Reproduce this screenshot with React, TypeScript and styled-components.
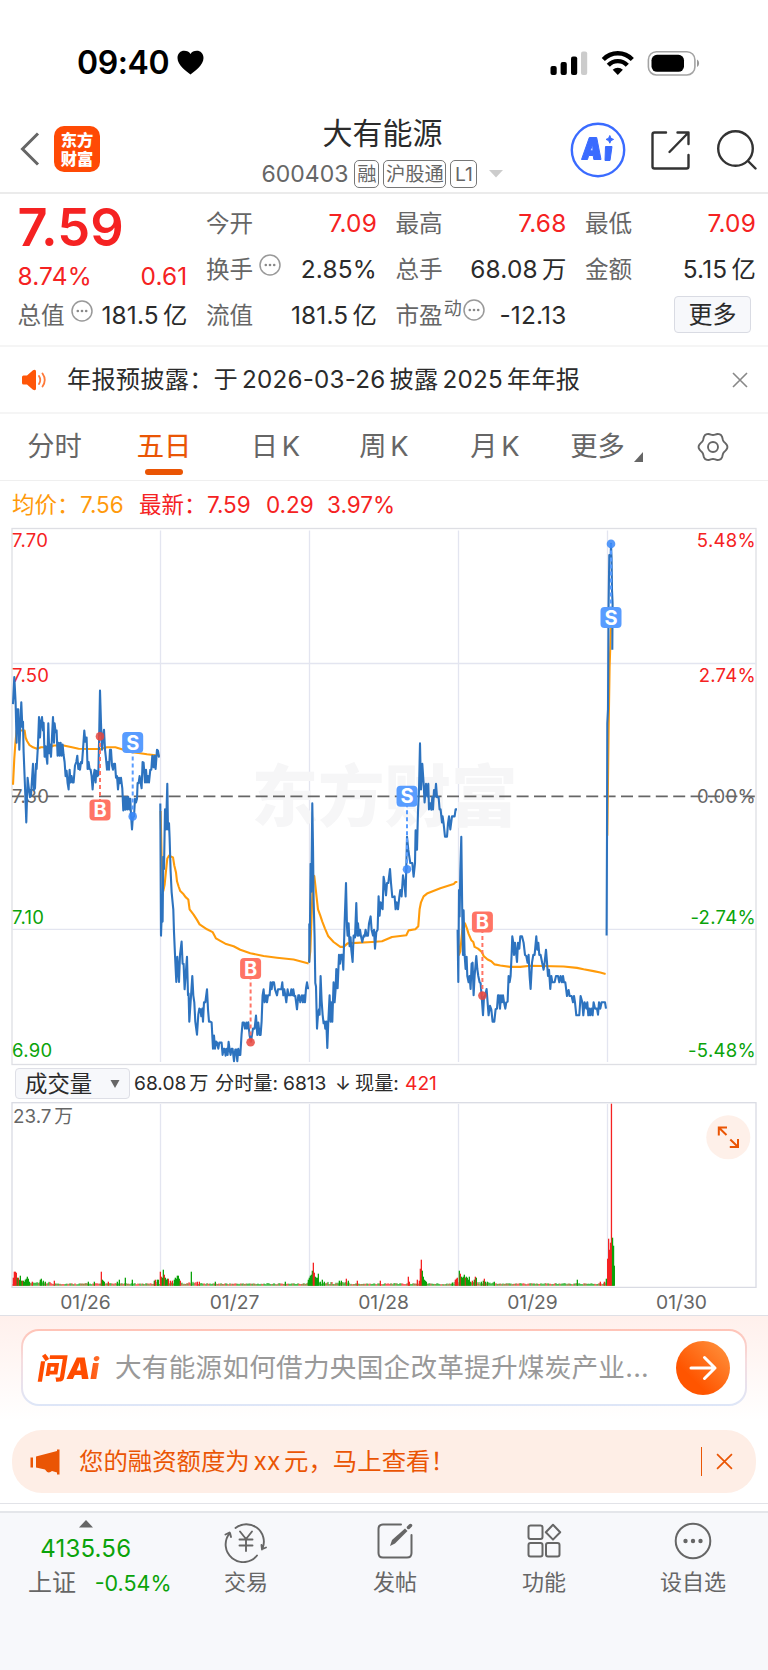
import React from "react";
import styled, { createGlobalStyle } from "styled-components";

const RED = "#f52222";
const GREEN = "#0aa30a";
const ORANGE = "#ea5504";
const INK = "#2b2b2b";
const GRAY = "#666";

const Global = createGlobalStyle`
  * { box-sizing: border-box; }
  body { margin: 0; background: #fff; }
  svg { display: block; flex: none; }
`;

const Screen = styled.div`
  width: 768px;
  height: 1670px;
  display: flex;
  flex-direction: column;
  overflow: hidden;
  background: #fff;
  color: ${INK};
  font-family: Inter, "Noto Sans CJK SC", sans-serif;
  line-height: 1.3;
  white-space: nowrap;
`;

/* Status bar */
const StatusBar = styled.div`
  height: 104px;
  flex: none;
  display: flex;
  align-items: center;
  padding: 21px 68px 0 77px;
`;
const Clock = styled.div`
  font-size: 32px;
  font-weight: 600;
  color: #000;
  line-height: 40px;
  width: 100px;
  letter-spacing: -0.4px;
`;
const StatusIcons = styled.div`
  margin-left: auto;
  display: flex;
  align-items: center;
`;

/* Title bar */
const NavBar = styled.header`
  height: 90px;
  flex: none;
  display: grid;
  grid-template-columns: 240px 1fr 240px;
  border-bottom: 2px solid #ebebeb;
`;
const NavLeft = styled.div`
  display: flex;
  align-items: center;
  padding: 2px 0 0 20px;
  gap: 14px;
`;
const AppLogo = styled.div`
  width: 46px;
  height: 46px;
  border-radius: 10px;
  background: #ff4a05;
  color: #fff;
  font-family: "Noto Sans CJK SC", sans-serif;
  font-weight: 900;
  font-size: 16.3px;
  line-height: 19px;
  text-align: center;
  padding-top: 4px;
`;
const NavCenter = styled.div`
  display: flex;
  flex-direction: column;
  align-items: center;
  padding-right: 3px;
`;
const StockName = styled.h1`
  margin: 9px 0 0;
  font-size: 30px;
  font-weight: 400;
  line-height: 40px;
`;
const CodeRow = styled.div`
  display: flex;
  align-items: center;
  height: 28px;
  margin-top: 7px;
  color: ${GRAY};
`;
const Code = styled.span`
  font-size: 23px;
  line-height: 28px;
  margin-right: 6px;
`;
const Tag = styled.span<{ $w: number }>`
  width: ${(p) => p.$w}px;
  height: 28px;
  border: 1px solid #777;
  border-radius: 5px;
  font-size: 19.3px;
  line-height: 26px;
  display: flex;
  justify-content: center;
  margin-right: 4px;
`;
const NavRight = styled.div`
  display: flex;
  align-items: center;
  justify-content: flex-end;
  padding: 3px 11.5px 0 0;
`;

/* Quote */
const Quote = styled.section`
  height: 153px;
  flex: none;
  display: grid;
  grid-template-columns: 170px 171px 171px 171px;
  column-gap: 18.5px;
  padding: 7px 0 0 17.5px;
  border-bottom: 2px solid #f5f5f5;
`;
const QuoteCol = styled.div`
  display: flex;
  flex-direction: column;
`;
const QuoteRow = styled.div<{ $h?: number; $red?: boolean }>`
  height: ${(p) => p.$h ?? 46}px;
  flex: none;
  display: flex;
  align-items: center;
  justify-content: space-between;
  font-size: 24.4px;
  word-spacing: -3px;
  letter-spacing: 0.2px;
  color: ${(p) => (p.$red ? RED : INK)};
`;
const Label = styled.span`
  color: ${GRAY};
  display: flex;
  align-items: center;
  font-size: 23.6px;
  letter-spacing: 0;
`;
const Sup = styled.span`
  font-size: 18px;
  margin-bottom: 14px;
  padding-left: 1px;
`;
const MoreDots = styled.span`
  margin: 0 0 11px 6px;
  ${Sup} + & { margin-left: 1px; }
`;
const Price = styled.div`
  height: 53px;
  font-size: 52.3px;
  line-height: 53px;
  font-weight: 600;
  color: ${RED};
`;
const MoreButton = styled.button`
  width: 77px;
  height: 37px;
  border: 1px solid #d9dbe3;
  border-radius: 4px;
  background: #f7f8fb;
  font: inherit;
  font-size: 24px;
  line-height: 34px;
  color: ${INK};
  padding: 0;
  margin: -3px 5px 0 auto;
`;

/* Notice */
const Notice = styled.section`
  height: 67px;
  flex: none;
  display: flex;
  align-items: center;
  padding: 1px 20px 0 21px;
  border-bottom: 2px solid #f5f5f5;
  font-size: 24.2px;
  word-spacing: -3px;
  letter-spacing: 0.24px;
`;
const NoticeText = styled.span`
  margin: 0 auto 0 19px;
`;

/* Period tabs */
const Tabs = styled.nav`
  height: 67px;
  flex: none;
  display: flex;
  border-bottom: 1px solid #efefef;
  font-size: 27.3px;
  word-spacing: -4px;
  color: ${GRAY};
`;
const Tab = styled.div<{ $w: number; $active?: boolean }>`
  width: ${(p) => p.$w}px;
  display: flex;
  flex-direction: column;
  align-items: center;
  justify-content: center;
  line-height: 40px;
  color: ${(p) => (p.$active ? ORANGE : GRAY)};
  ${(p) =>
    p.$active &&
    `-webkit-text-stroke: 0.2px ${ORANGE};
    &::after { content: ""; width: 38px; height: 6px; border-radius: 3px; background: ${ORANGE}; margin: 2px 0 -8px; }`}
`;
const TabMore = styled.div`
  display: flex;
  align-items: flex-end;
  gap: 9px;
  svg { margin-bottom: 5px; }
`;

const Legend = styled.div`
  height: 44px;
  flex: none;
  display: flex;
  align-items: center;
  padding: 4px 0 0 12px;
  font-size: 22.5px;
  color: ${RED};
`;
const LegendItem = styled.span<{ $w: number; $c?: string }>`
  width: ${(p) => p.$w}px;
  color: ${(p) => p.$c ?? RED};
`;

/* Charts */
const PriceChart = styled.svg`
  font-family: Inter, sans-serif;
`;
const VolumeBar = styled.div`
  height: 36px;
  flex: none;
  display: flex;
  align-items: center;
  padding: 0 0 1px 15px;
  font-size: 19.2px;
  word-spacing: -2.5px;
`;
const Select = styled.div`
  width: 115px;
  height: 31px;
  border: 1.5px solid #dedfe6;
  border-radius: 4px;
  background: #f7f8fb;
  display: flex;
  align-items: center;
  justify-content: space-between;
  padding: 0 9px 0 9px;
  font-size: 22.4px;
  line-height: 28px;
  margin-right: 4px;
`;
const VolumeText = styled.span<{ $w?: number; $red?: boolean }>`
  width: ${(p) => (p.$w ? p.$w + "px" : "auto")};
  color: ${(p) => (p.$red ? RED : INK)};
`;
const Dates = styled.div`
  height: 28px;
  flex: none;
  display: grid;
  grid-template-columns: repeat(5, 149px);
  padding-left: 11px;
  text-align: center;
  font-size: 19.3px;
  line-height: 29px;
  color: ${GRAY};
  border-bottom: 1px solid #dfe0e6;
`;

/* Ask AI */
const AskArea = styled.section`
  height: 114px;
  flex: none;
  padding: 13px 21px 0;
  background: linear-gradient(#fff0ec, #fff 92%);
`;
const AskCard = styled.div`
  height: 77px;
  border: 2px solid transparent;
  border-radius: 18px;
  background: linear-gradient(#fff, #fff) padding-box,
    linear-gradient(#ffc3b6, #f6dcde 40%, #dde6f8) border-box;
  display: flex;
  align-items: center;
  padding: 0 15px 0 15px;
`;
const AskLogo = styled.div`
  width: 77px;
  font-size: 29.5px;
  line-height: 34px;
  font-weight: 900;
  letter-spacing: -0.1px;
  transform: skewX(-9deg);
  background: linear-gradient(75deg, #ff4c00 60%, #ff9a66);
  -webkit-background-clip: text;
  background-clip: text;
  color: transparent;
`;
const AskText = styled.div`
  font-size: 26.6px;
  letter-spacing: 0.26px;
  color: #999;
  margin-right: auto;
`;

/* Banner */
const Banner = styled.section`
  height: 63px;
  flex: none;
  margin: 0 12px;
  border-radius: 30px;
  background: #feeee6;
  color: ${ORANGE};
  display: flex;
  align-items: center;
  padding: 0 23px 0 18px;
  font-size: 24.4px;
  word-spacing: -3px;
`;
const BannerText = styled.span`
  margin: 0 auto 0 18px;
`;
const BannerRule = styled.i`
  width: 1.5px;
  height: 29px;
  background: ${ORANGE};
  margin-right: 14px;
`;
const Spacer = styled.div`
  height: 18px;
  flex: none;
  border-bottom: 7px solid #fff;
  box-shadow: inset 0 -1px 0 #e2e3e8;
`;

/* Bottom bar */
const BottomBar = styled.footer`
  flex: 1;
  display: grid;
  grid-template-columns: 171.5px 149px 149px 149px 149px;
  background: #f7f8fb;
  border-top: 2px solid #e4e6ea;
  color: ${GRAY};
`;
const IndexCell = styled.div`
  display: flex;
  flex-direction: column;
  align-items: center;
  padding-top: 7px;
`;
const IndexValue = styled.div`
  font-size: 24px;
  line-height: 30px;
  margin-top: 6px;
  letter-spacing: 0.2px;
  color: ${GREEN};
`;
const IndexRow = styled.div`
  display: flex;
  align-items: center;
  align-self: stretch;
  justify-content: space-between;
  padding: 0 0 0 28px;
  font-size: 24px;
  line-height: 34px;
  margin-top: 2px;
`;
const IndexChange = styled.span`
  color: ${GREEN};
  font-size: 21.5px;
`;
const Action = styled.div`
  display: flex;
  flex-direction: column;
  align-items: center;
  padding-top: 6px;
  font-size: 22px;
  line-height: 32px;
  gap: 3px;
`;

const DotsIcon = () => (
  <svg width="22" height="22" viewBox="0 0 22 22">
    <circle cx="11" cy="11" r="10" fill="none" stroke="#999" strokeWidth="1.5" />
    <g fill="#888">
      <circle cx="6.8" cy="11" r="1.3" />
      <circle cx="11" cy="11" r="1.3" />
      <circle cx="15.2" cy="11" r="1.3" />
    </g>
  </svg>
);

const CloseIcon = ({ color, size }: { color: string; size: number }) => (
  <svg width={size} height={size} viewBox="0 0 16 16" fill="none" stroke={color} strokeWidth="1.6">
    <path d="M1 1L15 15M15 1L1 15" />
  </svg>
);

/* Six soft lobes around the centre */
const GEAR = Array.from({ length: 73 }, (_, i) => {
  const a = (i * Math.PI) / 36;
  const r = 13.2 + 1.2 * Math.cos(6 * a);
  return `${(16 + r * Math.cos(a)).toFixed(2)},${(16 + r * Math.sin(a)).toFixed(2)}`;
}).join(" ");

/* Price curves: x in thirds of a pixel from the left edge, y in 1/2.851 px from the top of the chart. */
const PRICE_LEFT = [
  "38,525 42,448 46,520 49,635 51,540 54,540 57,655 63,520 66,590 68,575 70,660 74,760 78,862 82,735 85,760 89,790 92,785 95,740 98,695 101,770 104,765 107,695 109,710 113,640 116,562 119,620 122,575 125,562 128,600 130,578 133,675 136,645 138,672 141,695 144,580 147,665 149,640 152,675 155,618 158,562 161,635 163,580 166,605 169,600 172,672 175,635 178,672 181,635 184,672 187,640 190,670 193,690 196,730 199,715 202,750 205,768 208,712 211,748 214,730 217,748 220,748 224,700 228,690 231,672 234,710 236,695 239,712 242,690 245,693 248,655 252,600 255,632 259,620 262,710 265,690 268,710 271,712 274,730 277,768 280,730 283,712 286,748 288,715 291,730 294,728 296,640 299,486 302,580 305,655 308,620 311,598 314,655 317,680 320,712 323,690 326,712 329,655 332,655 335,700 338,712 341,695 344,695 347,735 350,730 353,768 356,735 359,750 362,735 366,765 369,828 372,790 375,826 378,790 381,825 384,790 387,825 390,795 392,840 395,882 398,840 401,845 404,795 407,805 410,795 412,750 415,750 418,730 421,748 424,765 427,690 430,692 434,748 437,712 440,748 443,730 446,748 450,712 453,712 456,672 460,705 463,672 466,710 470,655 473,658 476,675 478,675",
  "480,808 482,1185 485,1100 487,1145 489,960 491,995 494,825 497,882 501,752 503,882 506,865 508,905 511,1000 514,1060 517,1090 519,1110 521,1175 524,1240 528,1317 531,1245 536,1317 539,1240 544,1202 547,1265 550,1265 553,1338 556,1300 560,1245 563,1355 565,1350 567,1430 571,1375 576,1300 579,1355 582,1375 585,1430 590,1467 594,1410 597,1393 600,1395 603,1415 606,1393 608,1430 611,1375 615,1375 620,1338 623,1395 626,1430 630,1430 634,1432 638,1507 641,1470 644,1507 647,1487 650,1490 654,1507 657,1490 664,1490 667,1525 670,1508 673,1508 676,1527 679,1508 682,1525 685,1488 688,1510 691,1525 694,1508 697,1508 701,1543 705,1510 708,1510 711,1543 714,1508 717,1525 720,1525 724,1465 727,1433 731,1433 734,1450 738,1433 740,1450 744,1432 748,1470 752,1487 755,1467 758,1450 763,1450 767,1413 771,1468 774,1433 778,1468 781,1468 784,1430 787,1355 790,1338 793,1375 797,1355 800,1375 803,1355 808,1355 811,1318 814,1338 817,1318 821,1318 824,1338 830,1355 833,1338 838,1338 843,1338 846,1318 849,1355 852,1338 855,1355 858,1375 862,1338 865,1355 870,1355 873,1338 876,1355 879,1338 882,1357 885,1357 890,1395 894,1355 897,1355 900,1375 905,1355 908,1375 911,1355 914,1375 917,1335 920,1318 923,1335 926,1335",
];
const PRICE_RIGHT = [
  "27,1150 27,1260 29,1150 31,980 33,1060 36,808 38,930 40,1080 43,1190 45,1320 47,1330 50,1450 53,1410 56,1395 58,1410 61,1300 64,1370 67,1410 70,1435 73,1430 75,1450 78,1430 81,1505 84,1430 88,1355 91,1430 93,1375 96,1430 100,1318 103,1375 106,1338 108,1280 112,1335 116,1240 119,1265 122,1240 126,1240 129,1282 133,1150 137,1035 140,1160 142,1185 145,1150 148,1215 151,1190 153,1225 157,1260 160,1185 164,1190 168,1092 171,1185 173,1150 176,1185 179,1168 182,1187 186,1203 190,1185 193,1187 196,1168 199,1185 203,1185 206,1150 211,1130 214,1168 218,1185 221,1168 224,1222 228,1175 232,1168 235,1073 238,1128 241,1090 247,1110 250,1017 253,1035 257,1070 260,1035 264,1035 269,995 272,1035 276,1075 283,1073 286,1110 289,1090 293,1110 297,1075 300,1055 304,1073 308,1013 312,1035 316,1073 320,903 324,940 327,960 330,978 336,978 340,1017 344,978 346,885 350,940 353,830 356,770 359,637 362,768 366,695 370,750 373,805 377,752 381,788 384,752 386,825 390,808 393,826 396,790 398,825 401,770 404,788 407,752 410,790 415,790 418,825 421,825 425,862 427,845 430,865 434,903 440,903 443,865 446,845 450,882 455,845 463,845 466,825 470,825",
  "472,1168 474,1317 476,1055 478,1130 480,1000 483,903 486,1130 488,1240 490,1113 493,1240 496,1280 499,1245 501,1300 505,1318 508,1300 511,1337 514,1265 517,1262 520,1355 523,1300 528,1243 531,1280 534,1300 538,1318 541,1320 544,1355 548,1412 551,1360 555,1355 559,1337 562,1375 565,1412 569,1385 573,1395 577,1430 582,1430 586,1395 590,1393 593,1355 596,1355 599,1393 602,1355 605,1375 608,1355 611,1375 615,1393 618,1375 622,1373 625,1300 628,1318 631,1300 634,1240 636,1187 639,1205 641,1240 644,1205 646,1220 650,1260 653,1205 657,1222 660,1187 665,1187 670,1205 674,1240 678,1243 682,1262 685,1240 688,1300 691,1337 695,1262 699,1240 703,1240 708,1187 711,1225 714,1205 717,1240 721,1240 725,1260 730,1282 733,1262 737,1225 740,1262 743,1300 746,1282 750,1337 753,1300 756,1318 763,1318 767,1300 773,1300 777,1318 781,1300 785,1318 788,1300 791,1318 795,1318 800,1357 805,1340 808,1357 814,1357 818,1375 821,1357 824,1375 828,1412 837,1412 841,1357 846,1375 849,1412 853,1375 858,1393 861,1375 864,1412 867,1393 870,1412 873,1393 877,1412 880,1375 884,1393 890,1393 893,1410 896,1375 900,1393 904,1375 914,1375 917,1393",
  "919,1185 920,900 921,580 923,540 925,240 927,100 931,110 932,68 934,110 935,200 937,238 936,370",
];
const AVG_LEFT = [
  "38,755 42,680 45,640 49,600 73,600 76,620 80,630 88,642 98,648 110,652 122,648 150,648 160,643 190,643 215,648 235,652 265,653 300,653 320,648 345,648 370,655 395,662 420,665 440,668 478,672",
  "481,830 484,960 487,1030 489,1058 493,1040 497,1000 501,965 506,957 518,962 522,985 527,1005 530,1030 535,1045 540,1058 550,1067 556,1075 564,1082 568,1110 580,1125 590,1140 598,1153 620,1167 637,1175 647,1193 660,1200 675,1208 700,1215 720,1225 750,1235 790,1243 830,1248 880,1253 925,1264",
];
const AVG_RIGHT = [
  "26,1260 30,1230 34,1130 37,1050 39,1013 42,1015 45,1040 49,1075 53,1110 60,1128 66,1145 74,1165 84,1187 100,1203 120,1217 130,1217 142,1207 215,1203 245,1201 275,1189 318,1184 325,1170 345,1167 354,1158 358,1110 362,1090 370,1073 380,1065 420,1050 460,1038 466,1032 471,1032",
  "473,1170 476,1240 480,1230 484,1190 488,1150 494,1150 500,1165 505,1180 513,1198 519,1203 523,1217 533,1222 545,1232 550,1243 562,1253 573,1258 583,1267 600,1270 630,1274 660,1274 690,1271 790,1273 830,1277 850,1281 880,1286 900,1290 916,1294",
  "921,900 925,600 928,420 932,300",
];

const toPath = (pts: string, dx: number) =>
  pts
    .split(" ")
    .map((p) => {
      const [x, y] = p.split(",").map(Number);
      return `${(x / 3 + dx).toFixed(1)},${(y / 2.851).toFixed(1)}`;
    })
    .join(" ");

const Lines = ({ left, right, color }: { left: string[]; right: string[]; color: string }) => (
  <g fill="none" stroke={color} strokeWidth="2.1" strokeLinejoin="round">
    {left.map((p, i) => (
      <polyline key={"l" + i} points={toPath(p, 0.3)} />
    ))}
    {right.map((p, i) => (
      <polyline key={"r" + i} points={toPath(p, 300.3)} />
    ))}
  </g>
);

const MARKS = [
  { t: "B", x: 100, y: 290, dot: 216.4 },
  { t: "S", x: 132.7, y: 222.4, dot: 296.4 },
  { t: "B", x: 250.6, y: 448.6, dot: 522.3 },
  { t: "S", x: 407, y: 276.2, dot: 349.3 },
  { t: "B", x: 482.4, y: 402, dot: 475.6 },
  { t: "S", x: 611, y: 97.5, dot: 23.9 },
];

const Mark = ({ t, x, y, dot }: (typeof MARKS)[number]) => {
  const c = t === "B" ? "#ff7465" : "#589cff";
  return (
    <g>
      <line x1={x} x2={x} y1={y} y2={dot} stroke={c} strokeWidth="2" strokeDasharray="4 3" />
      <circle cx={x} cy={dot} r="4.3" fill={t === "B" ? "#e8463e" : "#3a88f8"} fillOpacity="0.85" />
      <rect x={x - 10.5} y={y - 10.5} width="21" height="21" rx="4" fill={c} />
      <text x={x} y={y + 7.1} fontSize="20" fontWeight="700" fill="#fff" textAnchor="middle">
        {t}
      </text>
    </g>
  );
};

const COLUMNS = [160.5, 309.5, 458.5, 607.5];
const AXIS: [number, string, string, string][] = [
  [20.6, "7.70", "5.48%", RED],
  [154.9, "7.50", "2.74%", RED],
  [276, "7.30", "0.00%", "#666"],
  [396.8, "7.10", "-2.74%", GREEN],
  [530.3, "6.90", "-5.48%", GREEN],
];

/* Volume peaks as [x, height, up/down]; everything between them is low background trade. */
const PEAKS: [number, number, "r" | "g"][] = [
  [13, 8, "r"], [14, 14, "r"], [15, 14, "r"], [16, 13, "r"], [17, 8, "g"], [18, 8, "r"], [19, 6, "g"], [20, 10, "g"], [21, 5, "g"], [22, 5, "r"],
  [23, 5, "g"], [24, 4, "g"], [25, 6, "g"], [26, 7, "g"], [27, 9, "g"], [28, 7, "g"], [29, 4, "g"], [32, 4, "r"], [40, 6, "g"], [41, 7, "g"], [43, 5, "g"], [45, 4, "g"], [54, 5, "r"],
  [88, 4, "g"], [94, 4, "g"], [101, 14, "r"], [102, 6, "g"], [103, 5, "g"], [104, 4, "g"], [108, 4, "r"], [117, 4, "g"], [119, 6, "g"], [125, 8, "g"], [132, 6, "g"],
  [154, 5, "g"], [155, 6, "r"], [157, 6, "g"], [158, 6, "g"], [160, 14, "r"], [161, 9, "r"], [162, 8, "g"], [163, 16, "g"], [164, 11, "r"], [165, 8, "g"], [166, 6, "g"], [167, 7, "g"], [168, 7, "r"],
  [170, 5, "r"], [172, 5, "r"], [174, 6, "g"], [175, 8, "g"], [176, 7, "g"], [177, 10, "g"], [178, 10, "g"], [179, 7, "g"], [180, 5, "r"], [191, 14, "g"], [197, 4, "r"], [199, 4, "r"], [215, 4, "g"], [285, 4, "g"],
  [308, 6, "g"], [309, 8, "g"], [310, 10, "g"], [311, 11, "g"], [312, 15, "g"], [313, 23, "r"], [314, 13, "r"], [315, 9, "g"], [316, 8, "g"], [317, 8, "g"], [318, 12, "g"], [320, 4, "g"], [322, 6, "g"], [324, 4, "g"],
  [339, 5, "g"], [341, 5, "g"], [346, 7, "r"], [348, 5, "g"], [357, 5, "r"], [380, 5, "r"], [408, 9, "r"], [409, 4, "r"], [417, 6, "r"], [419, 5, "r"], [420, 17, "r"], [421, 26, "r"], [422, 15, "g"], [423, 9, "g"], [424, 6, "g"], [425, 5, "g"], [426, 4, "g"],
  [452, 3, "g"], [455, 6, "r"], [456, 7, "r"], [457, 8, "r"], [459, 15, "g"], [460, 12, "r"], [461, 9, "g"], [462, 8, "g"], [463, 9, "g"], [464, 11, "g"], [465, 8, "r"], [466, 9, "g"], [467, 8, "g"], [468, 6, "g"], [469, 9, "g"], [470, 4, "g"], [472, 5, "r"], [474, 6, "g"], [475, 9, "r"], [476, 8, "g"],
  [481, 4, "g"], [483, 5, "g"], [484, 7, "r"], [485, 4, "g"], [487, 4, "g"], [494, 4, "g"], [577, 6, "g"], [600, 4, "r"], [604, 4, "r"], [606, 7, "g"],
  [607.3, 27, "r"], [608.3, 47, "r"], [609.3, 36, "r"], [610.2, 43, "r"], [611.1, 182, "r"], [612.2, 48, "g"], [613.2, 40, "g"], [614, 20, "g"],
];
const QUIET = Array.from({ length: 602 }, (_, i) => {
  const wave = Math.abs(Math.sin(i * 12.9898) * 43758.5453) % 1;
  const near = i % 149 < 40 || i % 149 > 140 ? 1.3 : 0;
  return { x: 13 + i, h: 1.3 + wave * 1.3 + near * wave, red: (wave * 10) % 1 < 0.42 };
});

export default function App() {
  return (
    <Screen>
      <Global />
      <StatusBar>
        <Clock>09:40</Clock>
        <svg width="27" height="25" viewBox="0 0 27 25">
          <path d="M13.5 24.5C10 21.5 0.5 15.5 0.5 8C0.5 3.5 3.5 0.8 7.2 0.8C10 0.8 12.3 2 13.5 4C14.7 2 17 0.8 19.8 0.8C23.5 0.8 26.5 3.5 26.5 8C26.5 15.5 17 21.5 13.5 24.5Z" />
        </svg>
        <StatusIcons>
          <svg width="150" height="26" viewBox="0 0 150 26">
            <rect x="0.5" y="16" width="6.2" height="9" rx="2" />
            <rect x="10.6" y="12" width="6.2" height="13" rx="2" />
            <rect x="21" y="6.5" width="6.2" height="18.5" rx="2" />
            <rect x="31" y="1.5" width="6.2" height="23.5" rx="2" fill="#ccc" />
            <g fill="none" stroke="#000" strokeWidth="4.3">
              <path d="M53.3 9.5A20 20 0 0 1 82.3 9.5" />
              <path d="M58.3 15.3A13 13 0 0 1 77.3 15.3" />
            </g>
            <path d="M62.7 19.7A7.5 7.5 0 0 1 72.9 19.7L67.8 25Z" />
            <rect x="98.4" y="1.7" width="46.5" height="23.3" rx="8" fill="none" stroke="#a3a3a3" strokeWidth="1.6" />
            <rect x="101.5" y="4.8" width="32.5" height="17" rx="5.5" />
            <path d="M147 9.5C149.8 11 149.8 15.5 147 17Z" fill="#999" />
          </svg>
        </StatusIcons>
      </StatusBar>

      <NavBar>
        <NavLeft>
          <svg width="20" height="34" viewBox="0 0 20 34" fill="none" stroke="#666" strokeWidth="3">
            <path d="M18 1.5L2.5 17L18 32.5" />
          </svg>
          <AppLogo>
            东方
            <br />
            财富
          </AppLogo>
        </NavLeft>
        <NavCenter>
          <StockName>大有能源</StockName>
          <CodeRow>
            <Code>600403</Code>
            <Tag $w={25}>融</Tag>
            <Tag $w={63}>沪股通</Tag>
            <Tag $w={27}>L1</Tag>
            <svg width="22" height="8" viewBox="0 0 22 8">
              <path d="M8 0H22L15 7.5Z" fill="#ccc" />
            </svg>
          </CodeRow>
        </NavCenter>
        <NavRight>
          <svg width="188" height="56" viewBox="0 0 188 56">
            <circle cx="29" cy="28" r="26.2" fill="none" stroke="#3a6bff" strokeWidth="2.4" />
            <g fill="#3a6bff" stroke="#3a6bff" strokeWidth="1" strokeLinejoin="round">
              <path fillRule="evenodd" d="M12.5 37.5L20.3 15.5H27.7L32 37.5H24.8L24.2 33.5H19.7L18.5 37.5ZM21.3 28.8H24L23.6 22.5Z" />
              <path d="M36.5 24.5H43L41 38.5H36Z" />
              <path d="M40.8 13.5L42 16.3L44.6 17.4L42 18.6L40.8 21.2L39.6 18.6L37 17.4L39.6 16.3Z" />
            </g>
            <g fill="none" stroke="#333" strokeWidth="2.4" strokeLinecap="round" strokeLinejoin="round">
              <path d="M97 10.500H85.500Q83.500 10.500 83.500 12.500V44.500Q83.500 46.500 85.500 46.500H117.500Q119.500 46.500 119.500 44.500V33" />
              <path d="M108.500 10.500H119.500V22M119.500 10.500L100.500 30" />
              <circle cx="166.500" cy="26.500" r="17.300" />
              <path d="M179 39L186.500 46.500" />
            </g>
          </svg>
        </NavRight>
      </NavBar>

      <Quote>
        <QuoteCol>
          <Price>7.59</Price>
          <QuoteRow $red $h={45}>
            <span>8.74%</span>
            <span>0.61</span>
          </QuoteRow>
          <QuoteRow $h={34}>
            <Label>
              总值
              <MoreDots><DotsIcon /></MoreDots>
            </Label>
            <span>181.5 亿</span>
          </QuoteRow>
        </QuoteCol>
        <QuoteCol>
          <QuoteRow $red>
            <Label>今开</Label>
            <span>7.09</span>
          </QuoteRow>
          <QuoteRow>
            <Label>
              换手
              <MoreDots><DotsIcon /></MoreDots>
            </Label>
            <span>2.85%</span>
          </QuoteRow>
          <QuoteRow>
            <Label>流值</Label>
            <span>181.5 亿</span>
          </QuoteRow>
        </QuoteCol>
        <QuoteCol>
          <QuoteRow $red>
            <Label>最高</Label>
            <span>7.68</span>
          </QuoteRow>
          <QuoteRow>
            <Label>总手</Label>
            <span>68.08 万</span>
          </QuoteRow>
          <QuoteRow>
            <Label>
              市盈
              <Sup>动</Sup>
              <MoreDots><DotsIcon /></MoreDots>
            </Label>
            <span>-12.13</span>
          </QuoteRow>
        </QuoteCol>
        <QuoteCol>
          <QuoteRow $red>
            <Label>最低</Label>
            <span>7.09</span>
          </QuoteRow>
          <QuoteRow>
            <Label>金额</Label>
            <span>5.15 亿</span>
          </QuoteRow>
          <QuoteRow>
            <MoreButton>更多</MoreButton>
          </QuoteRow>
        </QuoteCol>
      </Quote>

      <Notice>
        <svg width="27" height="22" viewBox="0 0 27 22">
          <path d="M1 8Q1 6.5 2.5 6.5H6L12 1.3Q15 0 15 2.5V19.5Q15 22 12 20.7L6 15.5H2.5Q1 15.5 1 14Z" fill="#ff5608" />
          <path d="M18 7Q20.5 11 18 15M21.5 4.5Q26 11 21.5 17.5" fill="none" stroke="#ff7a3a" strokeWidth="1.8" strokeLinecap="round" />
        </svg>
        <NoticeText>年报预披露：于 2026-03-26 披露 2025 年年报</NoticeText>
        <CloseIcon color="#888" size={16} />
      </Notice>

      <Tabs>
        <Tab $w={109}>分时</Tab>
        <Tab $w={110} $active>五日</Tab>
        <Tab $w={113}>日 K</Tab>
        <Tab $w={104}>周 K</Tab>
        <Tab $w={118}>月 K</Tab>
        <Tab $w={105}>
          <TabMore>
            更多
            <svg width="9" height="10" viewBox="0 0 9 10"><path d="M9 0V10H0Z" fill="#666" /></svg>
          </TabMore>
        </Tab>
        <Tab $w={107}>
          <svg width="32" height="32" viewBox="0 0 32 32" fill="none" stroke="#666" strokeWidth="1.9" strokeLinejoin="round">
            <polygon points={GEAR} />
            <circle cx="16" cy="16" r="5" />
          </svg>
        </Tab>
      </Tabs>

      <Legend>
        <LegendItem $w={68} $c="#ff9a0c">均价：</LegendItem>
        <LegendItem $w={59} $c="#ff9a0c">7.56</LegendItem>
        <LegendItem $w={68}>最新：</LegendItem>
        <LegendItem $w={59}>7.59</LegendItem>
        <LegendItem $w={61}>0.29</LegendItem>
        <LegendItem $w={70}>3.97%</LegendItem>
      </Legend>

      <PriceChart width="768" height="541" viewBox="0 5 768 541">
        <g stroke="#e3e5f0" strokeWidth="1.3" fill="none">
          <rect x="12" y="8.5" width="744" height="536" stroke="#dedfe4" />
          <path d="M12 143.5H756M12 409.3H756" />
          {COLUMNS.map((x) => (
            <path key={x} d={`M${x} 10.5V542`} />
          ))}
        </g>
        <text x="384.5" y="301" textAnchor="middle" fontFamily="Noto Sans CJK SC" fontWeight="900" fontSize="66.5" fill="#f6f6f7">
          东方财富
        </text>
        <path d="M12 276.4H756" stroke="#666" strokeWidth="1.9" strokeDasharray="12 5.4" />
        <Lines left={AVG_LEFT} right={AVG_RIGHT} color="#ff9b0a" />
        <g fontSize="18.5">
          {AXIS.map(([y, price, pct, color]) => (
            <g key={price} fill={color}>
              <text x="12" y={y + 6.7} letterSpacing="0.3">{price}</text>
              <text x="756" y={y + 6.7} textAnchor="end" letterSpacing="0.3">{pct}</text>
            </g>
          ))}
        </g>
        <Lines left={PRICE_LEFT} right={PRICE_RIGHT} color="#2d73bf" />
        {MARKS.map((m) => (
          <Mark key={m.x} {...m} />
        ))}
      </PriceChart>

      <VolumeBar>
        <Select>
          成交量
          <svg width="10" height="8" viewBox="0 0 10 8"><path d="M0.5 0H9.5L5 8Z" fill="#666" /></svg>
        </Select>
        <VolumeText $w={81}>68.08 万</VolumeText>
        <VolumeText $w={68}>分时量:</VolumeText>
        <VolumeText $w={52}>6813</VolumeText>
        <VolumeText $w={20}>↓</VolumeText>
        <VolumeText $w={50}>现量:</VolumeText>
        <VolumeText $red>421</VolumeText>
      </VolumeBar>

      <svg width="768" height="186" viewBox="0 1102 768 186">
        <g stroke="#e3e5f0" strokeWidth="1.3" fill="none">
          {COLUMNS.map((x) => (
            <path key={x} d={`M${x} 1104V1286`} />
          ))}
          <rect x="12" y="1102.7" width="744" height="184.7" stroke="#d9dbe3" />
        </g>
        <text x="13" y="1122.5" fontSize="18.8" wordSpacing="-2.5" fill="#666">23.7 万</text>
        {QUIET.map((b) => (
          <rect key={b.x} x={b.x - 0.5} y={1285.7 - b.h} width="1" height={b.h} fill={b.red ? RED : GREEN} />
        ))}
        {PEAKS.map(([x, h, c]) => (
          <rect key={x} x={x - 0.3} y={1285.7 - h} width="1.3" height={h} fill={c === "r" ? RED : GREEN} />
        ))}
        <circle cx="728.3" cy="1137.3" r="22" fill="#fef0e9" />
        <path
          d="M718.8 1135.5V1127.5H727M719 1127.7L726.5 1135M738 1139V1147H729.8M737.8 1146.8L730.3 1139.5"
          fill="none"
          stroke={ORANGE}
          strokeWidth="2"
        />
      </svg>

      <Dates>
        <span>01/26</span>
        <span>01/27</span>
        <span>01/28</span>
        <span>01/29</span>
        <span>01/30</span>
      </Dates>

      <AskArea>
        <AskCard>
          <AskLogo>问Ai</AskLogo>
          <AskText>大有能源如何借力央国企改革提升煤炭产业...</AskText>
          <svg width="54" height="54" viewBox="0 0 54 54">
            <defs>
              <linearGradient id="go" x1="0.9" y1="0.1" x2="0.3" y2="0.7">
                <stop offset="0" stopColor="#ff8d38" />
                <stop offset="1" stopColor="#ff5500" />
              </linearGradient>
            </defs>
            <circle cx="27" cy="27" r="27" fill="url(#go)" />
            <path d="M15 27H39M28.5 16.5L39 27L28.5 37.5" fill="none" stroke="#fff" strokeWidth="3" strokeLinecap="round" strokeLinejoin="round" />
          </svg>
        </AskCard>
      </AskArea>

      <Banner>
        <svg width="31" height="26" viewBox="0 0 31 26" fill={ORANGE}>
          <path d="M0.5 8.5H3V18.5H0.5ZM6 7.5L27 2V0.5H29.5V25.5H27V23.5L22 22Q18 25.5 15 20.5L6 18.5Z" />
        </svg>
        <BannerText>您的融资额度为 xx 元，马上查看！</BannerText>
        <BannerRule />
        <CloseIcon color={ORANGE} size={17} />
      </Banner>
      <Spacer />

      <BottomBar>
        <IndexCell>
          <svg width="14" height="8" viewBox="0 0 14 8"><path d="M7 0L14 7.5H0Z" fill="#666" /></svg>
          <IndexValue>4135.56</IndexValue>
          <IndexRow>
            上证
            <IndexChange>-0.54%</IndexChange>
          </IndexRow>
        </IndexCell>
        <Action>
          <svg width="44" height="44" viewBox="0 0 44 44" fill="none" stroke="#666" strokeWidth="1.9" strokeLinecap="round" strokeLinejoin="round">
            <path d="M11.5 9A17.5 17.5 0 0 1 38.5 29.5M38 30.5L37.5 26M38.5 30L42 28.5" />
            <path d="M33 36.5A17.5 17.5 0 0 1 5.5 14.5M5.5 13.5L1.5 15.5M6 14L7 18" />
            <path d="M16 12.5L22 20L28 12.5M22 20V32M15.5 20.5H28.5M15.5 26.5H28.5" />
          </svg>
          交易
        </Action>
        <Action>
          <svg width="44" height="44" viewBox="0 0 44 44" fill="none" stroke="#666" strokeWidth="2" strokeLinecap="round" strokeLinejoin="round">
            <path d="M28 5.5H10Q5.5 5.5 5.5 10V34Q5.5 38.5 10 38.5H34Q38.5 38.5 38.5 34V16" />
            <path d="M17 27L19 21L32 9.5L34.5 12L22 24.5Z" fill="#666" stroke="none" />
            <path d="M35.5 8.5L37.5 6.5" strokeWidth="3.5" />
          </svg>
          发帖
        </Action>
        <Action>
          <svg width="44" height="44" viewBox="0 0 44 44" fill="none" stroke="#666" strokeWidth="2" strokeLinejoin="round">
            <rect x="6.5" y="6.5" width="14" height="13.5" rx="2" />
            <rect x="6.5" y="24" width="14" height="13.5" rx="2" />
            <rect x="24" y="24" width="13.5" height="13.5" rx="2" />
            <path d="M31 5.8L38.2 13.2L31 20.6L23.8 13.2Z" />
          </svg>
          功能
        </Action>
        <Action>
          <svg width="44" height="44" viewBox="0 0 44 44">
            <circle cx="22" cy="22" r="17.3" fill="none" stroke="#666" strokeWidth="2" />
            <g fill="#666">
              <circle cx="14.5" cy="22" r="2.2" />
              <circle cx="22" cy="22" r="2.2" />
              <circle cx="29.5" cy="22" r="2.2" />
            </g>
          </svg>
          设自选
        </Action>
      </BottomBar>
    </Screen>
  );
}
